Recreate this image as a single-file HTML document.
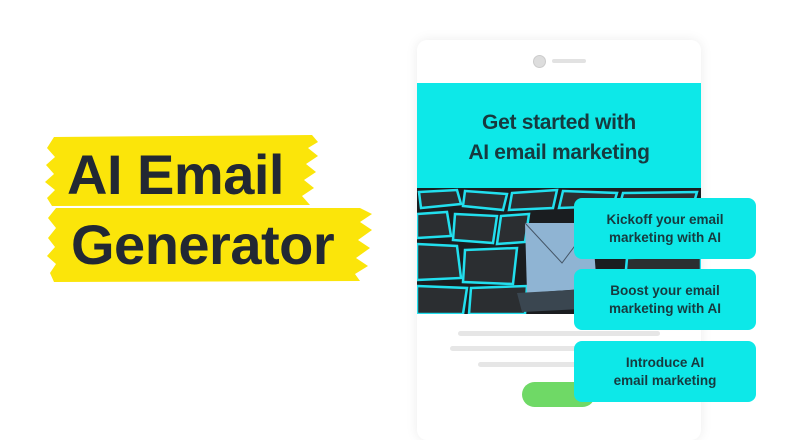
<!DOCTYPE html>
<html><head><style>
body{margin:0;width:800px;height:419px;background:#fff;overflow:hidden;position:relative;font-family:"Liberation Sans",sans-serif}
.a{position:absolute}
.t{font-weight:bold;color:#222833;font-size:56px;letter-spacing:-0.5px}
.card{position:absolute;left:574px;width:182px;height:61px;background:#0de8e8;border-radius:8px;color:#173a3f;font-weight:bold;font-size:13.5px;text-align:center;line-height:18px;display:flex;align-items:center;justify-content:center}
.ln{position:absolute;height:5px;background:#e6e6e6;border-radius:3px}
</style></head><body>
<svg class="a" style="left:0;top:0" width="400" height="419">
<path d="M54 137 L312 135 L318 142 L308 148 L318 156 L306 164 L316 172 L304 180 L314 188 L302 196 L310 205 L52 206 L47 198 L55 190 L45 182 L54 174 L46 165 L55 157 L47 148 Z" fill="#fbe50a"/>
<path d="M56 208 L360 208 L372 214 L360 222 L372 230 L358 240 L370 248 L356 258 L368 266 L355 274 L360 281 L54 282 L50 273 L56 264 L47 256 L55 247 L48 238 L56 228 L48 218 Z" fill="#fbe50a"/>
</svg>
<div class="a t" style="left:67px;top:142px">AI Email</div>
<div class="a t" style="left:71px;top:212px">Generator</div>
<div class="a" style="left:417px;top:40px;width:284px;height:400px;background:#fff;border-radius:10px;box-shadow:0 0 12px rgba(0,0,0,.08)"></div>
<div class="a" style="left:533px;top:55px;width:11px;height:11px;border-radius:50%;background:#ddd;border:1px solid #ccc"></div>
<div class="a" style="left:552px;top:59px;width:34px;height:4px;background:#e2e2e2;border-radius:2px"></div>
<div class="a" style="left:417px;top:83px;width:284px;height:105px;background:#0de8e8;color:#173a3f;font-weight:bold;font-size:21px;letter-spacing:-0.3px;text-align:center;line-height:30px;padding-top:25px;box-sizing:border-box">Get started with<br>AI email marketing</div>
<div class="a" style="left:417px;top:188px;width:284px;height:126px;background:#1a1d20;overflow:hidden">
<svg width="284" height="126"><g fill="#2b2e31" stroke="#22dfee" stroke-width="2.5"><path d="M2 4 L40 2 L44 16 L4 20 Z"/><path d="M48 3 L90 6 L86 22 L46 18 Z"/><path d="M95 5 L140 2 L136 20 L92 22 Z"/><path d="M146 3 L200 5 L196 18 L142 20 Z"/><path d="M206 5 L280 4 L276 18 L202 20 Z"/><path d="M0 26 L30 24 L34 48 L0 50 Z"/><path d="M38 26 L80 28 L76 55 L36 52 Z"/><path d="M84 28 L112 26 L108 54 L80 56 Z"/><path d="M0 56 L40 58 L44 90 L0 92 Z"/><path d="M48 62 L100 60 L96 96 L46 94 Z"/><path d="M0 98 L50 100 L46 126 L0 126 Z"/><path d="M54 100 L110 98 L108 126 L52 126 Z"/><path d="M200 24 L284 22 L284 60 L205 62 Z"/><path d="M210 70 L284 68 L284 126 L205 126 Z"/></g>
<path d="M108 35 L175 35 L180 100 L110 105 Z" fill="#8fb4d3"/><path d="M108 35 L145 75 L175 35" stroke="#456" fill="none"/><path d="M100 105 L190 100 L185 120 L105 124 Z" fill="#3a4650"/></svg></div>
<div class="ln" style="left:458px;top:331px;width:202px"></div>
<div class="ln" style="left:450px;top:346px;width:130px"></div>
<div class="ln" style="left:478px;top:362px;width:100px"></div>
<div class="a" style="left:522px;top:382px;width:73px;height:25px;background:#6fd966;border-radius:13px"></div>
<div class="card" style="top:198px">Kickoff your email<br>marketing with AI</div>
<div class="card" style="top:269px">Boost your email<br>marketing with AI</div>
<div class="card" style="top:341px">Introduce AI<br>email marketing</div>
</body></html>
